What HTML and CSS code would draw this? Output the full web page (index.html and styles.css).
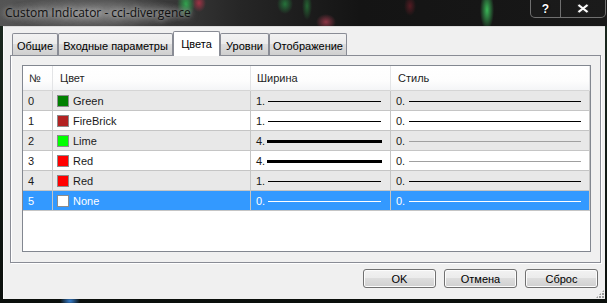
FILE: index.html
```
<!DOCTYPE html>
<html>
<head>
<meta charset="utf-8">
<link rel="stylesheet" href="styles.css">
</head>
<body>
<div class="window">
  <div class="titlebar">
    <span class="title">Custom Indicator - cci-divergence</span>
    <div class="caption-btns">
      <div class="cbtn help">?</div>
      <div class="cbtn close">
        <svg width="12" height="9" viewBox="0 0 12 9"><path d="M1.5 1 L10.5 8 M10.5 1 L1.5 8" stroke="#2a2a2a" stroke-width="4" stroke-linecap="round"/><path d="M1.5 1 L10.5 8 M10.5 1 L1.5 8" stroke="#fff" stroke-width="2.2"/></svg>
      </div>
    </div>
  </div>
  <div class="client">
    <div class="tabs">
      <div class="tab t1">Общие</div>
      <div class="tab t2">Входные параметры</div>
      <div class="tab t3 active">Цвета</div>
      <div class="tab t4">Уровни</div>
      <div class="tab t5">Отображение</div>
    </div>
    <div class="panel">
      <div class="list">
        <div class="row head">
          <div class="cell c1">№</div>
          <div class="cell c2">Цвет</div>
          <div class="cell c3">Ширина</div>
          <div class="cell c4">Стиль</div>
        </div>
        <div class="row alt">
          <div class="cell c1">0</div>
          <div class="cell c2"><span class="sw green"></span>Green</div>
          <div class="cell c3"><span class="lbl">1.</span><span class="ln w1"></span></div>
          <div class="cell c4"><span class="lbl2">0.</span><span class="ln s dark"></span></div>
        </div>
        <div class="row">
          <div class="cell c1">1</div>
          <div class="cell c2"><span class="sw firebrick"></span>FireBrick</div>
          <div class="cell c3"><span class="lbl">1.</span><span class="ln w1"></span></div>
          <div class="cell c4"><span class="lbl2">0.</span><span class="ln s dark"></span></div>
        </div>
        <div class="row alt">
          <div class="cell c1">2</div>
          <div class="cell c2"><span class="sw lime"></span>Lime</div>
          <div class="cell c3"><span class="lbl">4.</span><span class="ln w4"></span></div>
          <div class="cell c4"><span class="lbl2">0.</span><span class="ln s grey"></span></div>
        </div>
        <div class="row">
          <div class="cell c1">3</div>
          <div class="cell c2"><span class="sw red"></span>Red</div>
          <div class="cell c3"><span class="lbl">4.</span><span class="ln w4"></span></div>
          <div class="cell c4"><span class="lbl2">0.</span><span class="ln s grey"></span></div>
        </div>
        <div class="row alt">
          <div class="cell c1">4</div>
          <div class="cell c2"><span class="sw red"></span>Red</div>
          <div class="cell c3"><span class="lbl">1.</span><span class="ln w1"></span></div>
          <div class="cell c4"><span class="lbl2">0.</span><span class="ln s dark"></span></div>
        </div>
        <div class="row sel">
          <div class="cell c1">5</div>
          <div class="cell c2"><span class="sw none"></span>None</div>
          <div class="cell c3"><span class="lbl">0.</span><span class="ln w1 white"></span></div>
          <div class="cell c4"><span class="lbl2">0.</span><span class="ln s white"></span></div>
        </div>
      </div>
    </div>
    <div class="buttons">
      <div class="btn">OK</div>
      <div class="btn">Отмена</div>
      <div class="btn">Сброс</div>
    </div>
    <div class="grip"></div>
  </div>
</div>
</body>
</html>
```
FILE: styles.css
```
* { box-sizing: border-box; }
body {
  margin: 0;
  background: #0d110e;
  font-family: "Liberation Sans", Arial, sans-serif;
  font-size: 11px;
  color: #000;
}
.window {
  width: 607px;
  height: 303px;
  display: flex;
  flex-direction: column;
  overflow: hidden;
  background:
    radial-gradient(ellipse 10px 6px at 70px 301px, rgba(60,140,230,0.9), transparent),
    linear-gradient(180deg, #1c2a20 0, #0b0f0c 100%);
}
.titlebar {
  height: 26px;
  flex: none;
  display: flex;
  justify-content: space-between;
  align-items: flex-start;
  background:
    radial-gradient(ellipse 100px 16px at 95px 13px, rgba(150,150,150,0.85), transparent),
    radial-gradient(ellipse 9px 14px at 186px 4px, rgba(50,170,80,0.95), transparent),
    radial-gradient(ellipse 7px 9px at 199px 3px, rgba(170,50,70,0.9), transparent),
    radial-gradient(ellipse 10px 8px at 326px 22px, rgba(170,60,80,0.8), transparent),
    radial-gradient(ellipse 7px 20px at 487px 10px, rgba(60,190,90,0.95), transparent),
    radial-gradient(ellipse 5px 14px at 307px 6px, rgba(40,130,60,0.7), transparent),
    radial-gradient(ellipse 8px 10px at 285px 4px, rgba(40,150,70,0.7), transparent),
    radial-gradient(ellipse 6px 10px at 410px 6px, rgba(110,30,40,0.7), transparent),
    linear-gradient(90deg, #555 0, #474747 120px, #262626 240px, #141414 360px, #181818 607px);
}
.title {
  margin: 5px 0 0 5px;
  font-family: "Open Sans", "Liberation Sans", sans-serif;
  font-size: 12px;
  line-height: 16px;
  color: #101010;
  text-shadow: 0 0 5px rgba(220,220,220,0.7), 0 0 9px rgba(200,200,200,0.5);
}
.caption-btns {
  display: flex;
  height: 18px;
  margin-right: 1px;
  border: 1px solid rgba(170,170,170,0.6);
  border-top: none;
  border-radius: 0 0 5px 5px;
  background: rgba(30,30,30,0.5);
}
.cbtn {
  display: flex;
  align-items: center;
  justify-content: center;
  color: #fff;
  font-weight: bold;
  font-size: 12px;
  text-shadow: 0 0 2px #000, 0 0 2px #000;
}
.help { width: 29px; }
.close { width: 45px; border-left: 1px solid rgba(170,170,170,0.6); }

.client {
  flex: 1;
  margin: 0 2px 4px 3px;
  background: #f0f0f0;
  border-top: 1px solid #dcdcdc;
  border-left: 1px solid #fbfbfb;
  padding: 4px 4px 0 6px;
  display: flex;
  flex-direction: column;
  position: relative;
}
.tabs {
  display: flex;
  align-items: flex-end;
  height: 24px;
  margin-left: 2px;
  position: relative;
  z-index: 1;
}
.tab {
  height: 22px;
  border: 1px solid #898c95;
  border-bottom: none;
  border-radius: 2px 2px 0 0;
  background: linear-gradient(180deg, #f2f2f2 0, #ebebeb 50%, #dddddd 50%, #cfcfcf 100%);
  text-align: center;
  padding-top: 5px;
  line-height: 14px;
  white-space: nowrap;
}
.tab.active {
  height: 25px;
  margin-bottom: -1px;
  background: #fff;
  padding-top: 5px;
}
.t1 { width: 46px; }
.t2 { width: 115px; }
.t3 { width: 47px; }
.t4 { width: 49px; }
.t5 { width: 78px; }

.panel {
  height: 208px;
  flex: none;
  border: 1px solid #898c95;
  background: #f0f0f0;
  box-shadow: inset 1px 0 0 #fff, 1px 1px 0 #fff;
  padding: 9px 9px 0 11px;
}
.list {
  width: 569px;
  height: 187px;
  border: 1px solid #828790;
  background: #fff;
}
.row {
  display: grid;
  grid-template-columns: 30px 198px 140px 199px;
  height: 20px;
}
.row.head {
  height: 25px;
  background: linear-gradient(180deg, #ffffff 0, #fdfdfd 60%, #f3f4f6 100%);
}
.cell {
  border-right: 1px solid #c5c5c5;
  border-bottom: 1px solid #c5c5c5;
  display: flex;
  align-items: center;
  padding-left: 5px;
  padding-top: 1px;
  white-space: nowrap;
  color: #1a1a1a;
}
.head .cell {
  border-right: 1px solid #e3e4e6;
  border-bottom: 1px solid #d5d5d5;
  padding-left: 7px;
  padding-top: 0;
  color: #1e1e1e;
}
.head .c1 { padding-left: 6px; }
.head .c3 { padding-left: 6px; }
.row.alt { background: #e8e8e8; }
.row.sel { background: #3399ff; }
.row.sel .cell { color: #fff; }
.c2 { padding-left: 4px; }
.sw {
  width: 12px;
  height: 12px;
  border: 1px solid #8c8c8c;
  margin-right: 4px;
  flex: none;
}
.sw.green { background: #008000; }
.sw.firebrick { background: #b22222; }
.sw.lime { background: #00ff00; }
.sw.red { background: #ff0000; }
.sw.none { background: #fff; }
.lbl { width: 12px; flex: none; }
.lbl2 { width: 13px; flex: none; }
.ln { display: block; height: 1px; background: #000; }
.ln.w1 { width: 113px; }
.ln.w4 { width: 115px; height: 3px; margin-left: -1px; }
.ln.s { width: 172px; }
.ln.grey { background: #a0a0a0; }
.ln.white { background: #fff; }

.buttons {
  display: flex;
  justify-content: flex-end;
  gap: 8px;
  margin-top: 6px;
  padding-right: 3px;
}
.btn {
  width: 73px;
  height: 19px;
  border: 1px solid #707070;
  border-radius: 3px;
  background: linear-gradient(180deg, #f2f2f2 0, #ebebeb 50%, #dddddd 50%, #cfcfcf 100%);
  box-shadow: inset 0 0 0 1px #fcfcfc;
  display: flex;
  align-items: center;
  justify-content: center;
  padding-top: 1px;
}
.grip {
  position: absolute;
  right: 1px;
  bottom: 1px;
  width: 8px;
  height: 8px;
  background: radial-gradient(circle at 1px 1px, #9a9a9a 0.8px, transparent 1.2px) 0 0 / 3px 3px;
  clip-path: polygon(100% 0, 100% 100%, 0 100%);
}
```
